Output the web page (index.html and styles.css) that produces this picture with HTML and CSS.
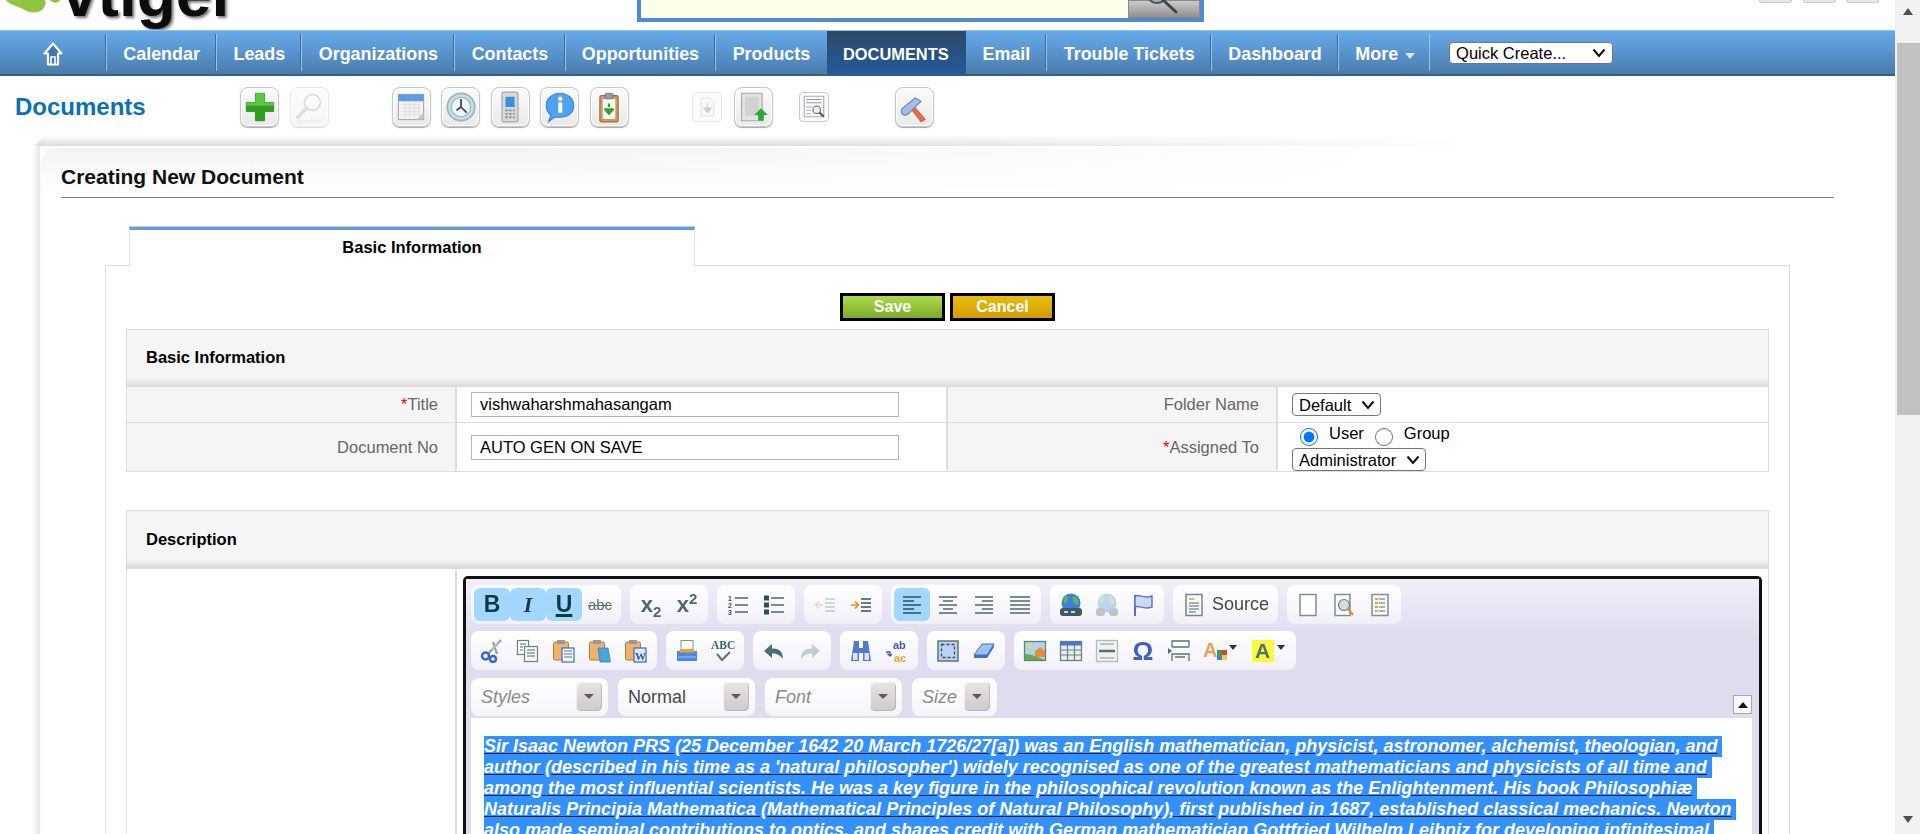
FILE: index.html
```html
<!DOCTYPE html>
<html lang="en">
<head>
<meta charset="utf-8">
<title>Creating New Document</title>
<link rel="stylesheet" href="styles.css">
</head>
<body>
<div class="app">
<main class="main">
  <header class="topbar">
    <div class="logo">
      <svg class="logo-mark" viewBox="0 0 60 14" width="60" height="14"><path d="M6 0C10 5 17 6 24 9.500C31 14 39 13 43 9C46 5 46 2 45 0Z" fill="#8ec63f"/><path d="M50 0C53 3.500 58 3.500 60 0Z" fill="#8ec63f"/></svg>
      <span class="logo-text">vtiger</span>
    </div>
    <div class="search">
      <div class="search-field"></div>
      <div class="search-btn"><svg viewBox="0 0 72 18" width="72" height="18"><circle cx="29" cy="-7" r="10" fill="#8fb6c4" stroke="#555" stroke-width="2"/><path d="M35 0L48 12" stroke="#444" stroke-width="3" stroke-linecap="round"/></svg></div>
    </div>
    <div class="top-tools"><span></span><span></span><span></span></div>
  </header>

  <nav class="nav">
    <a class="nav-home"><svg viewBox="0 0 22 24" width="22" height="24"><path d="M11 1.500L2.500 11.500H6V22.500H16V11.500H19.500Z" fill="#3f79ad" stroke="#fff" stroke-width="2.200" stroke-linejoin="round"/><path d="M9 22V15H13V22" fill="none" stroke="#fff" stroke-width="1.600"/></svg></a>
    <a class="nav-item">Calendar</a>
    <a class="nav-item">Leads</a>
    <a class="nav-item">Organizations</a>
    <a class="nav-item">Contacts</a>
    <a class="nav-item">Opportunities</a>
    <a class="nav-item">Products</a>
    <a class="nav-item nav-active">DOCUMENTS</a>
    <a class="nav-item nav-after">Email</a>
    <a class="nav-item">Trouble Tickets</a>
    <a class="nav-item">Dashboard</a>
    <a class="nav-item nav-more">More <i class="caret"></i></a>
    <select class="quick"><option>Quick Create...</option></select>
  </nav>

  <section class="modulebar">
    <h1 class="module-title">Documents</h1>
    <div class="mod-group">
      <a class="mod-btn"><svg viewBox="0 0 28 28" width="32" height="32"><path d="M10 2H18V10H26V18H18V26H10V18H2V10H10Z" fill="#2f9e1f" stroke="#1e7a12" stroke-width=".6"/><path d="M10 2H18V10H26V13H2V10H10Z" fill="#5fc545"/></svg></a>
      <a class="mod-btn mod-off"><svg viewBox="0 0 28 28" width="32" height="32"><circle cx="17" cy="10" r="7" fill="none" stroke="#aaa" stroke-width="1.500"/><path d="M12 15L4 23" stroke="#aaa" stroke-width="3" stroke-linecap="round"/><path d="M4 26H24" stroke="#ccc"/></svg></a>
    </div>
    <div class="mod-group gap-lg">
      <a class="mod-btn"><svg viewBox="0 0 28 28" width="32" height="32"><rect x="3" y="3" width="22" height="22" fill="#f2f2f2" stroke="#aaa"/><rect x="3" y="3" width="22" height="6" fill="#5e9be0"/><path d="M6 12H22M6 15H22M6 18H22M6 21H22M9 10V23M13 10V23M17 10V23M21 10V23" stroke="#dcdcdc" stroke-width=".7"/><path d="M19 25L25 19V25Z" fill="#c4c4c4"/></svg></a>
      <a class="mod-btn"><svg viewBox="0 0 28 28" width="32" height="32"><circle cx="14" cy="14" r="12" fill="#c4dfea" stroke="#a2b2b8" stroke-width="1.500"/><circle cx="14" cy="14" r="8.500" fill="#eef6f9" stroke="#8cb5c6"/><path d="M14 7V14L19 19M14 14L10 17" stroke="#444" stroke-width="1.500" fill="none"/></svg></a>
      <a class="mod-btn"><svg viewBox="0 0 28 28" width="32" height="32"><rect x="7" y="1" width="14" height="26" rx="2" fill="#d6d9dc" stroke="#a2a6ab"/><rect x="10" y="5" width="8" height="9" fill="#3d8ed8"/><path d="M10 17H18M10 20H18M10 23H18" stroke="#8c8c8c" stroke-width="1.600" stroke-dasharray="2 1.300"/></svg></a>
      <a class="mod-btn"><svg viewBox="0 0 28 28" width="32" height="32"><path d="M14 2C21 2 26 7 26 13C26 19 21 23 14 23H9L4 27L6 21C3 19 2 16 2 13C2 7 7 2 14 2Z" fill="#4ea3ee" stroke="#3a86cf"/><rect x="12.500" y="10" width="3.500" height="9" fill="#fff"/><circle cx="14.200" cy="6.800" r="2" fill="#fff"/></svg></a>
      <a class="mod-btn"><svg viewBox="0 0 28 28" width="32" height="32"><rect x="6" y="4" width="16" height="23" rx="1.500" fill="#cf9a62" stroke="#9a6c3c"/><rect x="8.500" y="7" width="11" height="17.500" fill="#f8f8f2"/><rect x="10.500" y="2" width="7" height="5" rx="1" fill="#999" stroke="#666" stroke-width=".5"/><path d="M14 11V14M14 20L10.500 16H17.500Z" stroke="#2aa535" fill="#2aa535" stroke-width="2" stroke-linejoin="round"/></svg></a>
    </div>
    <div class="mod-group gap-lg gap-wide">
      <a class="mod-plain mod-off"><svg viewBox="0 0 24 24" width="24" height="24"><path d="M6 3H15L19 7V21H6Z" fill="#eee" stroke="#bbb"/><path d="M12.500 8V14M8.500 13L12.500 18L16.500 13Z" fill="#888" stroke="#888"/></svg></a>
      <a class="mod-btn"><svg viewBox="0 0 28 28" width="32" height="32"><path d="M4 2H22V26H4Z" fill="#e2e2e2" stroke="#aaa"/><path d="M7 5H19V22H7Z" fill="#d2d2d2"/><path d="M21 15L27 21H23.500V26H18.500V21H15Z" fill="#25ad32"/></svg></a>
      <a class="mod-plain mod-list"><svg viewBox="0 0 24 24" width="26" height="26"><path d="M3 2H21V21H3Z" fill="#f8f8f8" stroke="#aab"/><path d="M5 5H19M5 8H19" stroke="#999"/><path d="M5 12H10M5 15H9M5 18H9" stroke="#aaa"/><circle cx="14.500" cy="14.500" r="3.500" fill="#eef" stroke="#666"/><path d="M17 17L21 21" stroke="#555" stroke-width="2"/></svg></a>
    </div>
    <div class="mod-group gap-xl">
      <a class="mod-btn"><svg viewBox="0 0 28 28" width="32" height="32"><path d="M13 12L24 25L20 27L10 14Z" fill="#ea6a3e" stroke="#c24a24" stroke-width=".6"/><path d="M4 15L15 6L20 9L9 20C7 22 3 21 3 18C3 17 3 16 4 15Z" fill="#a6bce3" stroke="#5f80bd"/></svg></a>
    </div>
  </section>

  <div class="card-frame">
    <div class="card">
      <h2 class="card-title">Creating New Document</h2>
      <div class="tab"><span>Basic Information</span></div>
      <div class="panel">
        <div class="actions">
          <button class="btn btn-save">Save</button>
          <button class="btn btn-cancel">Cancel</button>
        </div>

        <div class="block">
          <h3 class="block-head">Basic Information</h3>
          <div class="fields">
            <div class="cell label row-a"><span><em>*</em>Title</span></div>
            <div class="cell value row-a"><input class="text" value="vishwaharshmahasangam"></div>
            <div class="cell label row-a"><span>Folder Name</span></div>
            <div class="cell value row-a last"><select class="pick pick-folder"><option>Default</option></select></div>
            <div class="cell label row-b"><span>Document No</span></div>
            <div class="cell value row-b"><input class="text" value="AUTO GEN ON SAVE"></div>
            <div class="cell label row-b"><span><em>*</em>Assigned To</span></div>
            <div class="cell value row-b last assign">
              <div class="radios">
                <input type="radio" name="owner" checked><label>User</label>
                <input type="radio" name="owner"><label>Group</label>
              </div>
              <select class="pick pick-user"><option>Administrator</option></select>
            </div>
          </div>
        </div>

        <div class="block block-desc">
          <h3 class="block-head">Description</h3>
          <div class="desc-row">
            <div class="desc-label"></div>
            <div class="desc-value">
              <div class="editor">
                <div class="toolbar">
                  <div class="tb-row">
                    <div class="tb-group">
                      <a class="tb on"><b class="g-b">B</b></a>
                      <a class="tb on"><i class="g-i">I</i></a>
                      <a class="tb on"><u class="g-u">U</u></a>
                      <a class="tb"><s class="g-s">abc</s></a>
                    </div>
                    <div class="tb-group">
                      <a class="tb"><span class="g-x">x<sub>2</sub></span></a>
                      <a class="tb"><span class="g-x">x<sup>2</sup></span></a>
                    </div>
                    <div class="tb-group">
                      <a class="tb"><svg class="ic" viewBox="0 0 24 24"><path d="M9 5H22M9 12H22M9 19H22" stroke="#4c6a68" stroke-width="1.500"/><text x="2" y="7.500" class="tiny">1</text><text x="2" y="14.500" class="tiny">2</text><text x="2" y="21.500" class="tiny">3</text></svg></a>
                      <a class="tb"><svg class="ic" viewBox="0 0 24 24"><path d="M9 5H22M9 12H22M9 19H22" stroke="#4c6a68" stroke-width="1.500"/><rect x="2" y="2.500" width="5" height="5" fill="#2f4f52"/><rect x="2" y="9.500" width="5" height="5" fill="#2f4f52"/><rect x="2" y="16.500" width="5" height="5" fill="#2f4f52"/></svg></a>
                    </div>
                    <div class="tb-group">
                      <a class="tb off"><svg class="ic" viewBox="0 0 24 24"><path d="M12 6H22M12 10H22M12 14H22M12 18H22" stroke="#4c6a68" stroke-width="1.500"/><path d="M10 12H3M6 8.500L2.500 12L6 15.500" stroke="#f08a24" stroke-width="1.600" fill="none"/></svg></a>
                      <a class="tb"><svg class="ic" viewBox="0 0 24 24"><path d="M12 6H22M12 10H22M12 14H22M12 18H22" stroke="#35565a" stroke-width="1.500"/><path d="M2 12H9M6 8.500L9.500 12L6 15.500" stroke="#f08a24" stroke-width="1.600" fill="none"/></svg></a>
                    </div>
                    <div class="tb-group">
                      <a class="tb on"><svg class="ic" viewBox="0 0 24 24"><path d="M3 4H21M3 8H14M3 12H21M3 16H14M3 20H21" stroke="#28545a" stroke-width="1.600"/></svg></a>
                      <a class="tb"><svg class="ic" viewBox="0 0 24 24"><path d="M3 4H21M7 8H17M3 12H21M7 16H17M3 20H21" stroke="#4c6a68" stroke-width="1.500"/></svg></a>
                      <a class="tb"><svg class="ic" viewBox="0 0 24 24"><path d="M3 4H21M10 8H21M3 12H21M10 16H21M3 20H21" stroke="#4c6a68" stroke-width="1.500"/></svg></a>
                      <a class="tb"><svg class="ic" viewBox="0 0 24 24"><path d="M2 4H22M2 8H22M2 12H22M2 16H22M2 20H22" stroke="#4c6a68" stroke-width="1.600"/></svg></a>
                    </div>
                    <div class="tb-group">
                      <a class="tb"><svg class="ic" viewBox="0 0 24 24"><circle cx="12" cy="10" r="9.500" fill="#3f80d8"/><path d="M7 2C10 5 9 8 6 11L4 7ZM14 3C18 4 20 8 19 12C16 12 13 8 14 3Z" fill="#55c04a"/><rect x="1" y="15" width="22" height="8" rx="3" fill="#3d5a5c"/><path d="M5 19H19" stroke="#fff" stroke-width="1.500" stroke-dasharray="4 3"/></svg></a>
                      <a class="tb off"><svg class="ic" viewBox="0 0 24 24"><circle cx="12" cy="10" r="9.500" fill="#3f80d8"/><path d="M7 2C10 5 9 8 6 11L4 7ZM14 3C18 4 20 8 19 12C16 12 13 8 14 3Z" fill="#55c04a"/><rect x="1" y="15" width="9" height="8" rx="3" fill="#3d5a5c"/><rect x="14" y="15" width="9" height="8" rx="3" fill="#3d5a5c"/></svg></a>
                      <a class="tb"><svg class="ic" viewBox="0 0 24 24"><path d="M4 2V23" stroke="#4d6fd0" stroke-width="2"/><path d="M4 3C9 1 12 6 21 3V14C12 17 9 12 4 14Z" fill="#cfdaf2" stroke="#5a7ad2" stroke-width="1.500"/></svg></a>
                    </div>
                    <div class="tb-group">
                      <a class="tb tb-source"><svg class="ic" viewBox="0 0 24 24"><rect x="4" y="1.500" width="16" height="21" fill="#fafafa" stroke="#6c8a86" stroke-width="1.500"/><path d="M7 6H12" stroke="#f0a030" stroke-width="1.500"/><path d="M7 10H17M7 13H17M7 16H17M7 19H14" stroke="#4c6a68" stroke-width="1.200"/></svg><span>Source</span></a>
                    </div>
                    <div class="tb-group">
                      <a class="tb"><svg class="ic" viewBox="0 0 24 24"><path d="M4 1.500H20V22.500H4Z" fill="#fff" stroke="#7d908e" stroke-width="1.500"/></svg></a>
                      <a class="tb"><svg class="ic" viewBox="0 0 24 24"><path d="M3 1.500H18V22.500H3Z" fill="#fff" stroke="#7d908e" stroke-width="1.500"/><circle cx="12" cy="12" r="5.500" fill="#d6dcdc" stroke="#6c7c7c" stroke-width="1.200"/><path d="M16 16L21 22" stroke="#e98a2a" stroke-width="2.200"/></svg></a>
                      <a class="tb"><svg class="ic" viewBox="0 0 24 24"><rect x="4" y="1.500" width="16" height="21" fill="#fafafa" stroke="#7d908e" stroke-width="1.500"/><path d="M7 6H10M7 10H10M7 14H10M7 18H10" stroke="#f0a030" stroke-width="1.800"/><path d="M11 6H17M11 10H17M11 14H17M11 18H17" stroke="#55706e" stroke-width="1.200"/></svg></a>
                    </div>
                  </div>
                  <div class="tb-row">
                    <div class="tb-group">
                      <a class="tb"><svg class="ic" viewBox="0 0 24 24"><path d="M21 1L8 15M13 3L17 15" stroke="#8a9a98" stroke-width="2" fill="none"/><path d="M12 11L19 2" stroke="#b8c4c2" stroke-width="2"/><circle cx="5.500" cy="17" r="3.500" fill="none" stroke="#3766cc" stroke-width="2.500"/><circle cx="13" cy="20" r="3" fill="none" stroke="#3766cc" stroke-width="2.500"/></svg></a>
                      <a class="tb"><svg class="ic" viewBox="0 0 24 24"><rect x="1.500" y="1.500" width="11" height="14" fill="#fff" stroke="#6c8280" stroke-width="1.200"/><rect x="8.500" y="7.500" width="13" height="15" fill="#f7f7f7" stroke="#6c8280" stroke-width="1.200"/><path d="M4 5H10M4 8H7M4 11H7M11 11H19M11 14H19M11 17H19" stroke="#4c6a68"/></svg></a>
                      <a class="tb"><svg class="ic" viewBox="0 0 24 24"><rect x="1.500" y="3" width="15" height="18" rx="1.500" fill="#eeb26a" stroke="#b77a3c"/><rect x="5" y="1" width="8" height="4" fill="#999"/><rect x="10" y="9" width="12" height="14" fill="#fff" stroke="#3f66c8" stroke-width="1.200"/><path d="M12 12H20M12 15H20M12 18H20" stroke="#3f66c8"/></svg></a>
                      <a class="tb"><svg class="ic" viewBox="0 0 24 24"><rect x="1.500" y="3" width="15" height="18" rx="1.500" fill="#eeb26a" stroke="#b77a3c"/><rect x="5" y="1" width="8" height="4" fill="#999"/><path d="M10 9H20L22.500 23H12Z" fill="#47a5dc" stroke="#3585c0" stroke-width=".8"/></svg></a>
                      <a class="tb"><svg class="ic" viewBox="0 0 24 24"><rect x="1.500" y="3" width="15" height="18" rx="1.500" fill="#eeb26a" stroke="#b77a3c"/><rect x="5" y="1" width="8" height="4" fill="#999"/><rect x="10" y="9" width="12" height="14" fill="#dfe7f6" stroke="#3f66c8" stroke-width="1.200"/><text x="11" y="21" class="tiny-w">W</text></svg></a>
                    </div>
                    <div class="tb-group">
                      <a class="tb"><svg class="ic" viewBox="0 0 24 24"><rect x="6" y="1.500" width="12" height="10" fill="#fff" stroke="#83918f"/><path d="M2 12H22V22H2Z" fill="#4c88e0"/><rect x="5" y="10" width="14" height="3.500" fill="#f0a030"/><path d="M3 18H21" stroke="#9cc3f0"/></svg></a>
                      <a class="tb"><svg class="ic" viewBox="0 0 24 24"><text x="0" y="10" class="abc">ABC</text><path d="M6 15L11 21L19 13" stroke="#4c7a78" stroke-width="2" fill="none"/></svg></a>
                    </div>
                    <div class="tb-group">
                      <a class="tb"><svg class="ic" viewBox="0 0 24 24"><path d="M10 5L2 12L10 19V14.500C15 14.500 18 16 21 20C21 13 17 9 10 9.500Z" fill="#4a6e70"/></svg></a>
                      <a class="tb off"><svg class="ic" viewBox="0 0 24 24"><path d="M14 5L22 12L14 19V14.500C9 14.500 6 16 3 20C3 13 7 9 14 9.500Z" fill="#4a6e70"/></svg></a>
                    </div>
                    <div class="tb-group">
                      <a class="tb"><svg class="ic" viewBox="0 0 24 24"><path d="M5 2H10V9H14V2H19L22 22H14V14H10V22H2Z" fill="#5179d0"/><rect x="4" y="14" width="4.500" height="7" fill="#dbe5f8"/><rect x="15.500" y="14" width="4.500" height="7" fill="#dbe5f8"/></svg></a>
                      <a class="tb"><svg class="ic" viewBox="0 0 24 24"><text x="8" y="10" class="rep-b">ab</text><text x="9" y="22.500" class="rep-o">ac</text><path d="M1 13H5V17M5 17L2.500 14.500M5 17L7 15" stroke="#3f55c0" stroke-width="1.300" fill="none"/></svg></a>
                    </div>
                    <div class="tb-group">
                      <a class="tb"><svg class="ic" viewBox="0 0 24 24"><rect x="2" y="2" width="20" height="20" fill="#bcd2f5" stroke="#5c7472" stroke-width="1.500"/><rect x="5.500" y="5.500" width="13" height="13" fill="none" stroke="#34505a" stroke-width="1.300" stroke-dasharray="3 2"/></svg></a>
                      <a class="tb"><svg class="ic" viewBox="0 0 24 24"><path d="M10 5H22L15 16H2Z" fill="#9fc0f2" stroke="#4170d0"/><path d="M2 16H15V19H2ZM15 16L22 5V8L15 19Z" fill="#3d70d4"/></svg></a>
                    </div>
                    <div class="tb-group">
                      <a class="tb"><svg class="ic" viewBox="0 0 24 24"><rect x="1.500" y="2.500" width="21" height="19" fill="#a8d8e8" stroke="#62807e" stroke-width="1.300"/><path d="M2 21V15L9 16L22 21Z" fill="#67a845"/><path d="M12 12L17 8L22 12V18H12Z" fill="#ee8a3c"/><circle cx="6" cy="7" r="2.500" fill="#f5d65a"/></svg></a>
                      <a class="tb"><svg class="ic" viewBox="0 0 24 24"><rect x="1.500" y="2.500" width="21" height="19" fill="#e8ecee" stroke="#6c8280" stroke-width="1.300"/><rect x="1.500" y="2.500" width="21" height="4" fill="#4d75c8"/><path d="M1.500 11H22.500M1.500 16H22.500M8.500 6V21M15.500 6V21" stroke="#6c8280" stroke-width="1.200"/></svg></a>
                      <a class="tb"><svg class="ic" viewBox="0 0 24 24"><rect x="1.500" y="1.500" width="21" height="21" fill="#f0f2f2" stroke="#b0bcba" stroke-width="1.300"/><path d="M5 5H19M5 19H19" stroke="#a8b4b2" stroke-width="1.300"/><path d="M4 12H20" stroke="#55706e" stroke-width="2.500"/></svg></a>
                      <a class="tb"><span class="g-omega">Ω</span></a>
                      <a class="tb"><svg class="ic" viewBox="0 0 24 24"><path d="M5 8V2H22V8M5 8H22M5 22V15H22V22M8 18H18" stroke="#5c7472" stroke-width="1.300" fill="none"/><path d="M1 9L5 12L1 15Z" fill="#3f6bc8"/></svg></a>
                      <a class="tb tb-color"><svg class="ic" viewBox="0 0 24 24"><text x="0" y="18" class="a-orange">A</text><rect x="14" y="11" width="5" height="5" fill="#3aa04a"/><rect x="19" y="11" width="5" height="5" fill="#e0403a"/><rect x="14" y="16" width="5" height="5" fill="#3f7fd6"/><rect x="19" y="16" width="5" height="5" fill="#f5d040"/></svg><i class="tri"></i></a>
                      <a class="tb tb-color"><svg class="ic" viewBox="0 0 24 24"><rect x="1" y="1" width="22" height="22" fill="#f9f93c"/><text x="4" y="19" class="a-slate">A</text></svg><i class="tri"></i></a>
                    </div>
                  </div>
                  <div class="tb-row tb-combos">
                    <div class="combo"><span class="ph">Styles</span><i class="drop"><b></b></i></div>
                    <div class="combo"><span>Normal</span><i class="drop"><b></b></i></div>
                    <div class="combo"><span class="ph">Font</span><i class="drop"><b></b></i></div>
                    <div class="combo combo-sm"><span class="ph">Size</span><i class="drop"><b></b></i></div>
                    <a class="collapse"><b></b></a>
                  </div>
                </div>
                <div class="editor-body">
                  <p class="sel">Sir Isaac Newton PRS (25 December 1642 20 March 1726/27[a]) was an English mathematician, physicist, astronomer, alchemist, theologian, and</p>
                  <p class="sel">author (described in his time as a 'natural philosopher') widely recognised as one of the greatest mathematicians and physicists of all time and</p>
                  <p class="sel">among the most influential scientists. He was a key figure in the philosophical revolution known as the Enlightenment. His book Philosophiæ</p>
                  <p class="sel">Naturalis Principia Mathematica (Mathematical Principles of Natural Philosophy), first published in 1687, established classical mechanics. Newton</p>
                  <p class="sel">also made seminal contributions to optics, and shares credit with German mathematician Gottfried Wilhelm Leibniz for developing infinitesimal</p>
                </div>
              </div>
            </div>
          </div>
        </div>
      </div>
    </div>
  </div>
</main>
<aside class="scrollbar">
  <div class="sb-up"><i></i></div>
  <div class="sb-thumb"></div>
  <div class="sb-rest"></div>
  <div class="sb-down"><i></i></div>
</aside>
</div>
</body>
</html>
```
FILE: styles.css
```css
* { box-sizing: border-box; }
html, body { margin: 0; height: 100%; overflow: hidden; background: #fff; }
body { font-family: "Liberation Sans", Arial, sans-serif; font-size: 16.5px; color: #000; }
.app { display: flex; height: 834px; }
.main { flex: 1 1 auto; min-width: 0; height: 834px; overflow: hidden; }

/* top strip */
.topbar { display: flex; height: 30px; overflow: hidden; background: #fff; }
.logo { position: relative; flex: 0 0 637px; height: 30px; }
.logo-mark { display: block; }
.logo-text { position: absolute; left: 62px; bottom: 4px; font-size: 64px; line-height: 64px; font-weight: 700; color: #0c0c0c; text-shadow: 2px 2px 3px rgba(0,0,0,.55); }
.search { display: flex; width: 567px; height: 22px; border: 4px solid #4f8bcf; border-top: 0; }
.search-field { flex: 1; background: #ffffe9; }
.search-btn { flex: 0 0 72px; height: 18px; background: linear-gradient(#cfcfcf, #8c8c8c); box-shadow: inset 0 0 0 1px #8a8a8a; }
.search-btn svg { display: block; }
.top-tools { display: flex; gap: 10.500px; margin-left: auto; margin-right: 16px; }
.top-tools span { width: 33px; height: 3px; background: #e8e8e8; border: 1px solid #ccc; border-top: 0; border-radius: 0 0 3px 3px; }

/* nav */
.nav { display: flex; align-items: stretch; height: 46px; padding: 3px 0 3px; background: linear-gradient(#66a8e8 0, #5c98d4 40%, #4a7cab 100%); border-top: 1px solid #8fc1f0; border-bottom: 2px solid #38607e; }
.nav-home { flex: 0 0 106px; display: flex; align-items: center; justify-content: center; padding-top: 2px; }
.nav-item { display: flex; align-items: center; padding: 3px 16.300px 0; border-left: 1px solid #9cc2e8; box-shadow: -1px 0 0 #3f6d9b; font-size: 17.900px; font-weight: 700; color: #fff; white-space: nowrap; }
.nav-active { margin: -3px 0 -3px; padding: 3px 17.500px 0 16.500px; font-size: 16.400px; border-left: 0; box-shadow: none; background: linear-gradient(#2e4866, #225b9b); }
.nav-after { border-left: 0; box-shadow: none; }
.nav-more { padding-right: 14px; border-right: 1px solid #9cc2e8; }
.caret { display: inline-block; width: 0; height: 0; margin: 3px 0 0 7px; border: 5px solid transparent; border-top: 6px solid #dbe9f6; border-bottom: 0; }
.quick { width: 164px; height: 22px; margin: 8px 0 0 19px; padding: 0 0 0 6px; appearance: none; background: #fff url("data:image/svg+xml,%3Csvg xmlns='http://www.w3.org/2000/svg' width='14' height='10'%3E%3Cpath d='M1.500 1.500L7 8L12.500 1.500' fill='none' stroke='%23111' stroke-width='2'/%3E%3C/svg%3E") no-repeat right 6px center; border: 1px solid #767676; border-radius: 4px; font: 16.500px "Liberation Sans", Arial, sans-serif; }

/* module bar */
.modulebar { display: flex; align-items: flex-start; height: 59px; padding: 11px 0 0 15px; }
.module-title { flex: 0 0 225px; margin: 7px 0 0; font-size: 24px; line-height: 26px; font-weight: 700; color: #0a70b8; }
.mod-group { display: flex; gap: 10.500px; align-items: flex-start; }
.gap-lg { margin-left: 63px; }
.gap-xl { margin-left: 66px; }
.mod-btn { display: flex; align-items: center; justify-content: center; width: 39px; height: 40px; border: 1px solid #c6c6c6; border-radius: 8px; background: linear-gradient(#fbfbfb, #e9e9e9); box-shadow: 0 1px 1px #a8a8a8, inset 0 0 0 1px #fff; }
.mod-btn svg, .mod-plain svg, .tb > * { filter: blur(.35px); }
.mod-off { opacity: .4; }
.mod-plain { display: flex; align-items: center; justify-content: center; width: 30px; height: 30px; margin-top: 5px; border: 1px solid #c9c9c9; border-radius: 4px; background: #fafafa; }
.gap-wide .mod-btn { margin-left: 1.500px; }
.gap-wide .mod-list { margin-left: 15.500px; }

/* card */
.card-frame { margin-left: 32px; padding: 11px 0 0 8px; border-radius: 22px 0 0 0; background:
  linear-gradient(90deg, rgba(255,255,255,0) 800px, #fff 1440px) 0 0 / 100% 11px no-repeat,
  linear-gradient(#fff, #dcdcdc) 0 0 / 100% 11px no-repeat,
  linear-gradient(90deg, #fff, #e6e6e6) 0 0 / 8px 100% no-repeat; }
.card { padding: 2px 61px 0 21px; border-left: 1px solid #f8f8f8; border-radius: 20px 0 0 0; background:
  linear-gradient(#fff, #fff) 0 0 / 100% 2px no-repeat,
  linear-gradient(90deg, rgba(255,255,255,0) 450px, #fff 1360px) 0 0 / 100% 60px no-repeat,
  linear-gradient(#f3f3f3, #fff 50px) 0 0 / 100% 60px no-repeat, #fff; }
.card-title { height: 50px; margin: 0 0 29px -1px; padding-top: 16px; border-bottom: 1px solid #808080; font-size: 21px; line-height: 25px; font-weight: 700; color: #111; }
.tab { position: relative; display: flex; align-items: center; justify-content: center; width: 566px; height: 39px; margin: 0 0 -1px 67px; padding-bottom: 2px; background: #fff; border: 1px solid #ddd; border-top: 3px solid #629fe2; border-bottom: 0; font-weight: 700; font-size: 16.500px; color: #000; box-shadow: 0 -1px 0 #ccc; }
.panel { margin: 0 44px 0 43px; padding: 27px 20px 0; border: 1px solid #ddd; border-bottom: 0; }
.actions { display: flex; justify-content: center; gap: 5px; margin-bottom: 8px; }
.btn { width: 105px; height: 28px; padding: 0; border: 3px solid #000; font: 700 16px "Liberation Sans", Arial, sans-serif; color: #fff; }
.btn-save { background: linear-gradient(#abdc4c, #7eaa28); }
.btn-cancel { background: linear-gradient(#e9be10, #d29a00); }

.block { border: 1px solid #ddd; border-bottom: 0; }
.block-desc { margin-top: 38px; }
.block-head { height: 57px; margin: 0; padding: 0 19px 2px; display: flex; align-items: center; font-size: 16.500px; font-weight: 700; background: linear-gradient(#f5f5f5 0, #f5f5f5 calc(100% - 9px), #dadad6 100%); }
.block-desc .block-head { padding-bottom: 0; }
.fields { display: grid; grid-template-columns: 330px 491px 330px 490px; grid-template-rows: 36px 49px; }
.cell { display: flex; align-items: center; border-bottom: 1px solid #ddd; }
.label { justify-content: flex-end; padding-right: 17px; background: #f5f5f5; border-right: 2px solid #ddd; color: #666; }
.label em { font-style: normal; color: #f00; }
.value { padding-left: 14px; border-right: 2px solid #ddd; }
.value.last { border-right: 0; }
.text { width: 428px; height: 25px; padding: 0 8px; border: 1px solid #b5b5b5; font: 16.500px "Liberation Sans", Arial, sans-serif; color: #000; outline: 0; }
.pick { height: 23px; padding: 0 0 0 6px; appearance: none; background: #fff url("data:image/svg+xml,%3Csvg xmlns='http://www.w3.org/2000/svg' width='14' height='10'%3E%3Cpath d='M1.500 1.500L7 8L12.500 1.500' fill='none' stroke='%23111' stroke-width='2'/%3E%3C/svg%3E") no-repeat right 5px center; border: 1px solid #767676; border-radius: 4px; font: 16.500px "Liberation Sans", Arial, sans-serif; }
.pick-folder { width: 89px; }
.pick-user { width: 134px; }
.assign { flex-direction: column; align-items: flex-start; justify-content: flex-end; }
.radios { display: flex; align-items: flex-start; height: 24px; margin-bottom: 1px; line-height: 21px; }
.radios input { width: 18px; height: 18px; margin: 5px 11px 0 8px; accent-color: #0075ff; }
.radios label + input { margin-left: 11px; margin-right: 11px; }
.radios input:first-child { margin-left: 8px; }

.desc-row { display: grid; grid-template-columns: 330px 1fr; }
.desc-label { border-right: 2px solid #ddd; border-top: 1px solid #ddd; }
.desc-value { padding: 7px 6px 0; border-top: 1px solid #ddd; }

/* editor */
.editor { border: 3px solid #111; border-bottom: 0; border-radius: 5px 5px 0 0; background: #dfdcef; }
.toolbar { display: flex; flex-direction: column; gap: 7px; padding: 6px 2px 2px 5px; background: linear-gradient(#f0eff9 0, #dfdcef 60px); }
.tb-row { display: flex; gap: 9px; height: 39px; }
.tb-group { display: flex; padding: 3px; height: 39px; border-radius: 8px; background: linear-gradient(#fff, #f1f0f9); }
.tb { display: flex; align-items: center; justify-content: center; width: 36px; height: 33px; border-radius: 6px; color: #42605f; }
.tb.on { background: #a3d7ff; }
.tb.off { opacity: .3; }
.ic { display: block; width: 24px; height: 24px; }
.g-b { font-size: 23px; font-weight: 700; color: #0d3a3f; }
.g-i { font: italic 700 22px "Liberation Serif", serif; color: #1c3a3c; }
.g-u { font-size: 23px; font-weight: 700; color: #0d3a3f; text-decoration-thickness: 3px; }
.g-s { font-size: 15px; color: #557270; }
.g-x { font-size: 22px; font-weight: 700; color: #4a6b68; line-height: 22px; }
.g-x sub, .g-x sup { font-size: 15px; line-height: 0; }
.g-omega { font-size: 26px; font-weight: 700; color: #3f5fc8; line-height: 26px; }
.tiny { font-size: 7px; font-weight: 700; fill: #2f4f52; }
.tiny-w { font: 700 11px "Liberation Serif", serif; fill: #3a5a88; }
.abc { font: 700 11.500px "Liberation Serif", serif; fill: #3f6563; }
.rep-b { font-size: 11px; font-weight: 700; fill: #4353bf; }
.rep-o { font-size: 11px; font-weight: 700; fill: #f0a030; }
.a-orange { font-size: 20px; font-weight: 700; fill: #f2a050; }
.a-slate { font-size: 21px; font-weight: 700; fill: #4f6f78; }
.tb-source { width: 99px; gap: 6.500px; justify-content: flex-start; padding-left: 5.500px; font-size: 18px; color: #474747; }
.tb-color { width: 48px; justify-content: flex-start; padding-left: 6px; gap: 2px; }
.tri { width: 0; height: 0; margin-bottom: 6px; border: 4px solid transparent; border-top: 5px solid #333; border-bottom: 0; }
.tb-combos { position: relative; gap: 10px; height: 38px; margin-top: 1px; }
.combo { display: flex; align-items: center; justify-content: space-between; width: 137px; height: 38px; padding: 0 6px 0 10px; border-radius: 8px; background: linear-gradient(#fff, #f5f4fb); font-size: 18px; color: #474747; }
.combo-sm { width: 85px; padding-right: 7px; }
.ph { font-style: italic; color: #8a8a8a; }
.drop { display: flex; align-items: center; justify-content: center; width: 26px; height: 29px; margin-bottom: 1px; border-radius: 5px; background: linear-gradient(#e9e5e5, #cfcaca); box-shadow: inset -1px -1px 0 #bdb8b8, inset 1px 1px 0 #f2f0f0; }
.drop b { width: 0; height: 0; border: 5px solid transparent; border-top: 5px solid #5a5a5a; border-bottom: 0; }
.collapse { position: absolute; right: 5px; top: 17px; display: flex; align-items: center; justify-content: center; width: 19px; height: 19px; background: #f6f6fb; border: 1px solid #a8a8a8; }
.collapse b { width: 0; height: 0; border: 5px solid transparent; border-bottom: 6px solid #111; border-top: 0; }
.editor-body { margin: 0 7px 0 5px; padding: 18px 0 40px 13px; background: #fff; }
.sel { width: fit-content; margin: 0; padding-right: 5px; white-space: nowrap; background: #3390ff; font-size: 18px; font-style: italic; font-weight: 700; line-height: 21px; color: #fff; text-decoration: underline; text-decoration-color: #14233a; }

/* scrollbar */
.scrollbar { flex: 0 0 25px; display: flex; flex-direction: column; height: 834px; background: #f1f1f1; }
.sb-up { height: 43px; display: flex; justify-content: center; padding-top: 8px; }
.sb-up i { width: 0; height: 0; border: 5.500px solid transparent; border-bottom: 7px solid #505050; border-top: 0; }
.sb-thumb { height: 372px; margin-left: 2px; background: #c1c1c1; }
.sb-rest { flex: 1; }
.sb-down { height: 26px; display: flex; justify-content: center; padding-top: 8px; }
.sb-down i { width: 0; height: 0; border: 5.500px solid transparent; border-top: 7px solid #505050; border-bottom: 0; }
```
